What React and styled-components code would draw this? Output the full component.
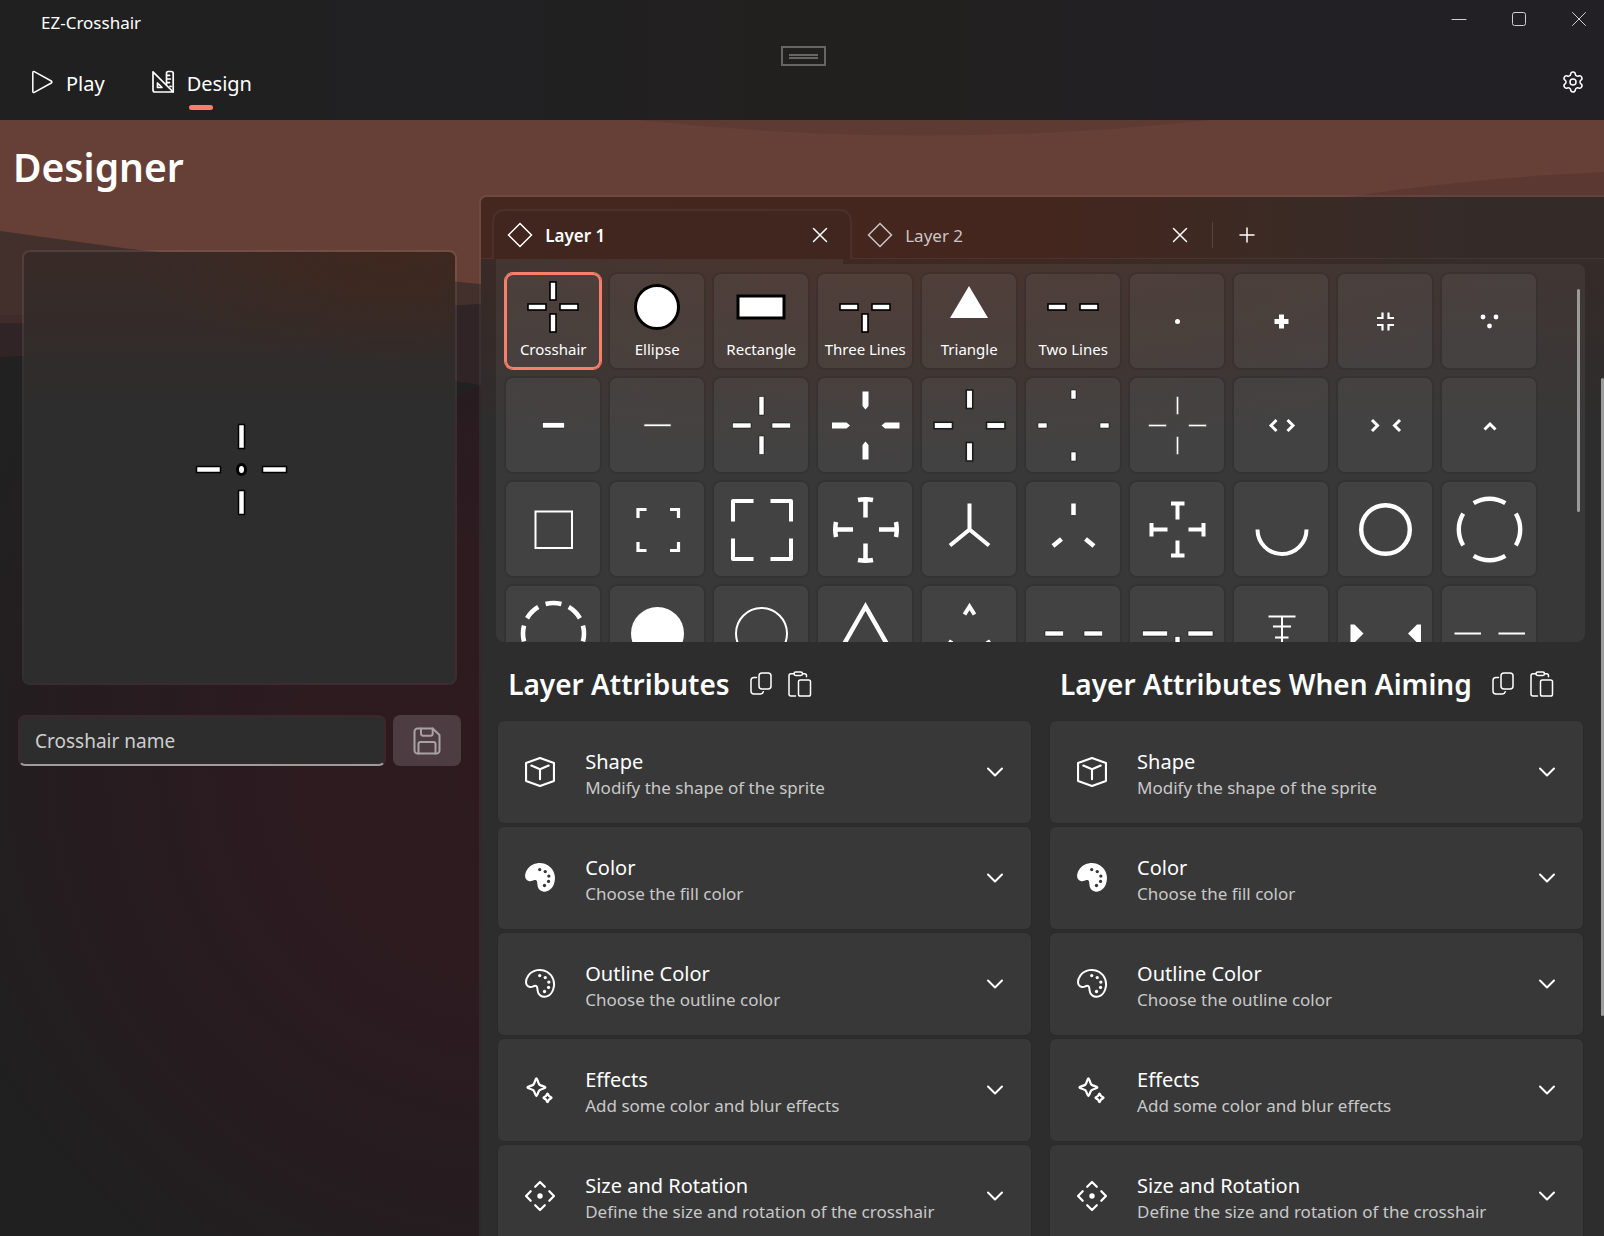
import React, { useState } from "react";
import styled, { createGlobalStyle } from "styled-components";
import { Settings } from "lucide-react";

const GlobalStyle = createGlobalStyle`
  *, *::before, *::after { box-sizing: border-box; }
  body {
    margin: 0;
    background: #202020;
    color: #fff;
    font-family: "Noto Sans", "Open Sans", sans-serif;
  }
  button, input { font: inherit; color: inherit; }
  button { padding: 0; border: 0; background: none; cursor: pointer; }
  svg { display: block; flex: none; }
`;

/* ---------- window chrome ---------- */

const Window = styled.div`
  height: 100vh;
  display: flex;
  flex-direction: column;
  overflow: hidden;
`;

const Header = styled.header`
  position: relative;
  background: linear-gradient(to right, #202020, #212022 30%, #22201e 55%, #222024 75%);
`;

const TitleBar = styled.div`
  display: flex;
  justify-content: space-between;
  align-items: flex-start;
  height: 44px;
  padding-left: 41px;
`;

const AppName = styled.span`
  font-size: 17px;
  line-height: 46px;
`;

const WindowButton = styled.button`
  width: 60px;
  height: 38px;
  margin-right: ${(p) => (p.$last ? "-5px" : "0")};
  display: inline-flex;
  align-items: center;
  justify-content: center;
  color: #d0d0d0;
`;

const WindowButtons = styled.div`
  display: flex;
  overflow: hidden;
`;

const DragHandle = styled.div`
  position: absolute;
  top: 46px;
  left: 50%;
  width: 45px;
  height: 20px;
  margin-left: -21px;
  border: 2px solid #666563;
  display: flex;
  flex-direction: column;
  justify-content: center;
  gap: 1px;
  padding: 0 6px;

  &::before, &::after {
    content: "";
    height: 2px;
    background: #666563;
  }
`;

const Nav = styled.nav`
  display: flex;
  align-items: center;
  gap: 46px;
  height: 76px;
  padding: 0 19px 0 30px;
`;

const NavLink = styled.a`
  display: flex;
  align-items: center;
  gap: 12px;
  color: #fff;
  font-size: 20px;
  line-height: 30px;
  text-decoration: none;
`;

const NavText = styled.span`
  position: relative;
  padding-top: 3px;

  &::after {
    content: "";
    display: ${(p) => (p.$active ? "block" : "none")};
    position: absolute;
    left: 2px;
    bottom: -11px;
    width: 24px;
    height: 5px;
    border-radius: 3px;
    background: #f8806a;
  }
`;

const GearButton = styled.button`
  margin-left: auto;
`;

/* ---------- page ---------- */

const Main = styled.main`
  position: relative;
  flex: 1;
  min-height: 0;
  display: grid;
  grid-template-columns: minmax(0, 3fr) minmax(0, 7fr);
  grid-template-rows: minmax(0, 1fr);
`;

const Backdrop = styled.svg`
  position: absolute;
  inset: 0;
  width: 100%;
  height: 100%;
`;

const Side = styled.section`
  position: relative;
`;

const PageTitle = styled.h1`
  margin: 0;
  padding: 19px 0 55px 13px;
  font-size: 39px;
  line-height: 56px;
  font-weight: 600;
`;

const Preview = styled.div`
  margin: 0 24px 0 22px;
  aspect-ratio: 1;
  display: flex;
  align-items: center;
  justify-content: center;
  border: 2px solid rgba(255, 255, 255, 0.08);
  border-radius: 8px;
  background:
    radial-gradient(ellipse 60% 26% at 85% 0, rgba(70, 36, 20, 0.5), transparent),
    linear-gradient(#382a27, #332b29 18%, #2d2d2d 36%);
  background-clip: padding-box;
`;

const NameForm = styled.form`
  display: flex;
  gap: 7px;
  padding: 30px 20px 0 18px;
`;

const NameInput = styled.input`
  flex: 1;
  min-width: 0;
  height: 51px;
  padding: 0 15px;
  border: 2px solid #3c272e;
  border-bottom-color: #a09a9b;
  border-radius: 7px;
  background: #2d2d2d;
  font-size: 19px;
  outline: none;

  &::placeholder { color: #cdcdcd; opacity: 1; }
`;

const SaveButton = styled.button`
  width: 68px;
  height: 51px;
  display: flex;
  align-items: center;
  justify-content: center;
  border-radius: 7px;
  background: #4d3c42;
  color: #aaa1a4;
`;

/* ---------- layer panel ---------- */

const Panel = styled.section`
  position: relative;
  margin: 75px 0 0 -2px;
  overflow: hidden;
  border: 2px solid rgba(255, 255, 255, 0.05);
  border-width: 2px 0 0 2px;
  border-top-left-radius: 8px;
  background:
    radial-gradient(ellipse 620px 220px at 36% 50px, rgba(90, 34, 14, 0.28), transparent),
    linear-gradient(#3a2d2a, #332b29 100px, #2d2d2d 240px);
  background-clip: padding-box;
`;

const TabStrip = styled.div`
  display: flex;
  align-items: flex-end;
  height: 62px;
  padding-left: 11px;
  background: linear-gradient(to right, #45271f, #44261e 50%, #3c2a24 70%, #342b29 88%);
  box-shadow: inset 0 -1px rgba(255, 255, 255, 0.06);
`;

const Tab = styled.div`
  display: flex;
  align-items: center;
  width: 360px;
  height: 50px;
  padding: 0 22px 0 13px;
  border: 2px solid ${(p) => (p.$active ? "rgba(255, 255, 255, 0.05)" : "transparent")};
  border-bottom: 0;
  border-radius: 12px 12px 0 0;
  background: ${(p) => (p.$active ? "#40261f" : "none")};
  color: ${(p) => (p.$active ? "#fff" : "#cdc5c3")};
  font-size: 17px;
  font-weight: ${(p) => (p.$active ? 600 : 400)};
`;

const TabLabel = styled.button`
  flex: 1;
  display: flex;
  align-items: center;
  gap: 12px;
  text-align: left;
`;

const CloseButton = styled.button`
  color: #fff;
`;

const AddButton = styled.button`
  display: flex;
  align-items: center;
  height: 26px;
  margin-bottom: 11px;
  padding-left: 25px;
  border-left: 1px solid rgba(255, 255, 255, 0.12);
`;

const TabFoot = styled.div`
  width: 347px;
  height: 5px;
  margin-left: 15px;
  background: rgba(255, 255, 255, 0.055);
`;

const Picker = styled.div`
  position: relative;
  height: 378px;
  margin: 0 19px 0 15px;
  padding: 9px;
  overflow: hidden;
  border-radius: 0 8px 8px 8px;
  background: rgba(255, 255, 255, 0.055);
`;

const TileGrid = styled.div`
  display: grid;
  grid-template-columns: repeat(auto-fill, 96px);
  gap: 8px;
`;

const Tile = styled.button`
  position: relative;
  height: 96px;
  border-radius: 8px;
  background: rgba(255, 255, 255, 0.05);
  box-shadow: ${(p) =>
    p.$selected
      ? "inset 0 0 0 2px #f8806a, 0 0 0 1px #f8806a"
      : "inset 0 0 0 1px rgba(0, 0, 0, 0.2), 0 0 0 1px rgba(0, 0, 0, 0.08)"};
`;

const TileName = styled.span`
  position: absolute;
  left: 0;
  right: 0;
  bottom: 9px;
  font-size: 15px;
  line-height: 22px;
  white-space: nowrap;
`;

const ScrollThumb = styled.div`
  position: absolute;
  top: ${(p) => p.$top}px;
  right: ${(p) => p.$right}px;
  width: 3px;
  height: ${(p) => p.$length}px;
  border-radius: 2px;
  background: #9b9b9b;
`;

const Columns = styled.div`
  display: grid;
  grid-template-columns: minmax(0, 1fr) minmax(0, 1fr);
  gap: 17px;
  padding: 18px 20px 0 16px;
`;

const ColumnHead = styled.div`
  display: flex;
  align-items: center;
  height: 48px;
  margin-bottom: 12px;
  padding-left: 11px;
  gap: 14px;
`;

const ColumnTitle = styled.h2`
  margin: 0 5px 0 0;
  font-size: 28px;
  line-height: 48px;
  font-weight: 600;
  white-space: nowrap;
`;

const CardList = styled.div`
  display: grid;
  gap: 2px;
`;

const Card = styled.button`
  display: flex;
  align-items: center;
  gap: 27px;
  height: 104px;
  padding: 0 26px 0 24px;
  border: 1px solid #2a2a2a;
  border-radius: 7px;
  background: #383838;
  text-align: left;
`;

const CardText = styled.span`
  flex: 1;
  display: grid;
  padding-top: 3px;
`;

const CardTitle = styled.span`
  font-size: 20px;
  line-height: 28px;
`;

const CardHint = styled.span`
  font-size: 17px;
  line-height: 24px;
  color: #c8c8c8;
`;

/* ---------- icons ---------- */

const Line = ({ size = 24, width = 1.5, box = 24, children }) => (
  <svg
    width={size}
    height={size}
    viewBox={`0 0 ${box} ${box}`}
    fill="none"
    stroke="currentColor"
    strokeWidth={width}
    strokeLinecap="round"
    strokeLinejoin="round"
    aria-hidden="true"
  >
    {children}
  </svg>
);

const PlayIcon = () => (
  <Line>
    <path d="M2.8 2.4v19.2c0 .8.8 1.2 1.5.8l17-9.4c.8-.5.8-1.5 0-2l-17-9.4c-.7-.4-1.5 0-1.5.8z" />
  </Line>
);

const DesignIcon = () => (
  <Line width={1.7}>
    <path d="M2 1.8 22.2 22H4a2 2 0 0 1-2-2zM6.5 13v4.5H11z" />
    <path d="M15.5 14.5V3.2c0-1 .6-1.7 1.6-1.7h3.4c1 0 1.7.7 1.7 1.7V22M16 5.4h2.5M16 9h3.4M16 12.6h2.5M19 16.4h1" />
  </Line>
);

const CrossIcon = ({ size = 16, width = 1.5 }) => (
  <Line size={size} width={width} box={16}>
    <path d="m1.5 1.5 13 13m0-13-13 13" />
  </Line>
);

const DiamondIcon = () => (
  <Line size={26} box={26}>
    <path d="M13 1.5 24.5 13 13 24.5 1.5 13z" strokeLinejoin="miter" />
  </Line>
);

const SaveIcon = () => (
  <Line size={28} width={2} box={28}>
    <path d="M4.5 1.5h15.2L26.5 8v15.5a3 3 0 0 1-3 3h-19a3 3 0 0 1-3-3v-19a3 3 0 0 1 3-3z" />
    <path d="M8 1.5v5a2.2 2.2 0 0 0 2.2 2.2h7.3a2.2 2.2 0 0 0 2.2-2.2v-5M5.5 26.5V17a2 2 0 0 1 2-2h13a2 2 0 0 1 2 2v9.500" />
  </Line>
);

const CopyIcon = () => (
  <Line>
    <rect x="10" y="1" width="12" height="16" rx="3" />
    <path d="M7.5 5.500H5a3 3 0 0 0-3 3V19a3 3 0 0 0 3 3h6.500a3 3 0 0 0 2.800-2.300" />
  </Line>
);

const PasteIcon = () => (
  <Line size={26} box={26}>
    <rect x="7" y="1" width="8.5" height="3.5" rx="1.7" />
    <path d="M7 2.800H4a2 2 0 0 0-2 2V23a2 2 0 0 0 2 2h4.500M15.500 2.800h2a2 2 0 0 1 2 2v1" />
    <rect x="11.5" y="9" width="12" height="16" rx="1.8" />
  </Line>
);

const ChevronIcon = () => (
  <Line size={20} width={2} box={20}>
    <path d="m3 6.500 7 7 7-7" />
  </Line>
);

const CubeIcon = () => (
  <Line size={36} width={1.4}>
    <path d="M12 2.600 21.300 6v12L12 21.400 2.700 18V6zM6.200 7.700 12 10.200l5.800-2.500M12 10.200v6.600" />
  </Line>
);

const PALETTE =
  "M3.839 5.858c2.94-3.916 9.03-5.055 13.364-2.36 4.28 2.66 5.854 7.777 4.1 12.577-1.655 4.533-6.016 6.328-9.159 4.048-1.177-.854-1.634-1.925-1.854-3.664l-.106-.987-.045-.398c-.123-.934-.311-1.352-.705-1.572-.535-.298-.892-.305-1.595-.033l-.351.146-.179.078c-1.014.44-1.688.595-2.541.416l-.2-.047-.164-.047c-2.789-.864-3.202-4.647-.565-8.157z";

const DOTS = [[11.8, 6.4], [15.5, 7.7], [17.9, 10.7], [17.7, 14.3], [15, 17]];

const PaletteIcon = ({ filled }) => (
  <Line size={36} width={filled ? 0 : 1.4}>
    <path
      d={PALETTE}
      fill={filled ? "currentColor" : "none"}
      transform={filled ? undefined : "translate(.7 .7) scale(.94)"}
    />
    {DOTS.map(([x, y]) => (
      <circle key={y} cx={x} cy={y} r={1.1} stroke="none" fill={filled ? "#383838" : "currentColor"} />
    ))}
  </Line>
);

const EffectsIcon = () => (
  <Line size={36} width={1.5}>
    <path d="M9.600 4.200c.7 0 1 3.200 2 4.200s4 1.200 4 1.900-3 .9-4 1.900-1.300 3.800-2 3.800-1-2.800-2-3.800-4-1.200-4-1.900 3-.9 4-1.900 1.300-4.200 2-4.200z" />
    <path d="M17 14.400c.5 0 .6 1.300 1.100 1.700s1.600.6 1.600 1.100-1.100.7-1.600 1.100-.6 1.700-1.100 1.700-.6-1.300-1.100-1.700-1.600-.6-1.600-1.100 1.100-.7 1.600-1.100.6-1.700 1.100-1.700z" />
  </Line>
);

const MoveIcon = () => (
  <Line size={36}>
    <path d="M8.800 5.800 12 2.700l3.200 3.100M8.800 18.200l3.200 3.100 3.200-3.100M5.800 8.800 2.700 12l3.100 3.200M18.200 8.800l3.100 3.200-3.100 3.200" />
    <circle cx="12" cy="12" r="1.8" fill="currentColor" stroke="none" />
  </Line>
);

/* ---------- crosshair sprites, drawn on a 96 x 96 tile ---------- */

const bars = (list, outline = 0.5, edge = "#000") =>
  list.map(([x, y, w, h]) => (
    <rect key={`${x}-${y}`} x={x} y={y} width={w} height={h} fill="#fff" stroke={edge} strokeWidth={outline} />
  ));

const Stroke = ({ d, w = 3, join = "miter", cap = "butt" }) => (
  <path d={d} fill="none" stroke="#fff" strokeWidth={w} strokeLinejoin={join} strokeLinecap={cap} />
);

const arcs = (r, count, spread) =>
  Array.from({ length: count }, (_, i) => {
    const mid = (i * 2 * Math.PI) / count - Math.PI / 2;
    const half = (spread * Math.PI) / 180;
    const at = (a) => `${48 + r * Math.cos(a)} ${48 + r * Math.sin(a)}`;
    return `M${at(mid - half)}A${r} ${r} 0 0 1 ${at(mid + half)}`;
  }).join("");

const cross = (near, far, t) => [
  [48 - t / 2, 48 - far, t, far - near],
  [48 - t / 2, 48 + near, t, far - near],
  [48 - far, 48 - t / 2, far - near, t],
  [48 + near, 48 - t / 2, far - near, t],
];

const SPRITES = [
  { name: "Crosshair", art: bars([[45, 9, 6, 18], [45, 41, 6, 18], [23, 31, 18, 6], [55, 31, 18, 6]], 1.6) },
  { name: "Ellipse", art: <circle cx="48" cy="34" r="21.5" fill="#fff" stroke="#000" strokeWidth="3" /> },
  { name: "Rectangle", art: bars([[25, 23, 46, 22]], 3) },
  { name: "Three Lines", art: bars([[23, 31, 18, 6], [55, 31, 18, 6], [45, 41, 6, 18]], 1.6) },
  { name: "Triangle", art: <path d="M48 13 67 45H29z" fill="#fff" /> },
  { name: "Two Lines", art: bars([[23, 31, 18, 6], [55, 31, 18, 6]], 1.6) },
  { art: <circle cx="48" cy="48" r="2.5" fill="#fff" /> },
  { art: <Stroke d="M48 41v14M41 48h14" w={5} /> },
  { art: <Stroke d="M39.500 44.500h5.500v-5.500M56.500 44.500H51v-5.500M39.500 51.500h5.500V57M56.500 51.500H51V57" w={2.2} /> },
  {
    art: [[41.5, 43.5], [54.5, 43.5], [48, 52.5]].map(([x, y]) => (
      <circle key={x} cx={x} cy={y} r="2.4" fill="#fff" />
    )),
  },
  { art: bars([[37, 45, 22, 5.5]]) },
  { art: bars([[34.5, 46.5, 27, 2.5]], 0.8, "#555") },
  { art: bars(cross(10.5, 29, 5)) },
  {
    art: (
      <path
        fill="#fff"
        d="M45 14h6v14.500L48 32l-3-3.500zM45 82h6V67.500L48 64l-3 3.500zM14.500 45v6H29l3.500-3L29 45zM82 45v6H67.500L64 48l3.500-3z"
      />
    ),
  },
  { art: bars(cross(17, 35.5, 6.5), 1.6, "#1c1c1c") },
  { art: bars(cross(26.5, 35.5, 5)) },
  { art: bars(cross(11, 29, 2.5), 0.8, "#555") },
  { art: <Stroke d="m43 42.500-5.500 5.500 5.500 5.500M54 42.500l5.500 5.500-5.500 5.500" /> },
  { art: <Stroke d="m34.500 42.500 5.500 5.500-5.500 5.500M62.500 42.500 57 48l5.500 5.500" /> },
  { art: <Stroke d="m43 52 5.500-5.500L54 52" /> },
  { art: <Stroke d="M30 30h36.500v36.500H30z" w={2} /> },
  { art: <Stroke d="M37 28h-8.500v8.500M60.500 28H69v8.500M37 69h-8.500v-8.500M60.500 69H69v-8.500" w={3.2} /> },
  {
    art: (
      <Stroke
        d="M40 19.500H19.500V40M57 19.500h20.500V40M40 77.500H19.500V57M57 77.500h20.500V57"
        w={4}
        join="round"
      />
    ),
  },
  {
    art: (
      <Stroke
        d="M40.500 18.500q7.500-1.500 15 0M48 18v18M40.500 78.500q7.500 1.500 15 0M48 79V62M18.500 40.500q-1.500 7.500 0 15M18 48h17.500M78.500 40.500q1.500 7.500 0 15M79 48H61.500"
        w={4.5}
      />
    ),
  },
  { art: <Stroke d="M48 22v26L28.500 64M48 48l19.500 16" w={4} /> },
  { art: <Stroke d="M48 22v11.500M36 57.500 27.500 64.500M60 57.500l8.500 7" w={4.5} /> },
  {
    art: (
      <Stroke
        d="M41.500 22h13.500M48 22v16M41.500 74h13.500M48 74V59M22 41.500v13.500M22 48h16M74 41.500v13.500M74 48H59"
        w={4}
      />
    ),
  },
  { art: <Stroke d="M24 48a24.500 24.500 0 0 0 49 0" w={4} /> },
  { art: <circle cx="48" cy="48" r="24.3" fill="none" stroke="#fff" strokeWidth="4.4" /> },
  { art: <Stroke d={arcs(30.7, 4, 31)} w={4.4} /> },
  { art: <Stroke d={arcs(30.5, 8, 15)} w={4.6} /> },
  { art: <circle cx="48" cy="48" r="26.5" fill="#fff" /> },
  { art: <circle cx="48" cy="48" r="25.5" fill="none" stroke="#fff" strokeWidth="2" /> },
  { art: <Stroke d="M48 21 20 70h56z" w={4.5} /> },
  { art: <Stroke d="m43 29 5-8 5 8M30 55l-7 11h9M66 55l7 11h-9" w={4} /> },
  { art: bars([[19.5, 45.5, 18.5, 5], [58.5, 45.5, 18.5, 5]]) },
  { art: bars([[13, 45.5, 25, 5], [58.5, 45.5, 25, 5], [45.5, 51, 5, 25]]) },
  { art: <Stroke d="M35 31h27M39.500 41h18M41.500 52h13.500M48.500 31v43" w={2} /> },
  { art: <path fill="#fff" d="M13 39h4l9 9-9 9h-4zM83.500 39h-4l-9 9 9 9h4z" /> },
  { art: <Stroke d="M13 48h26.500M57 48h26.500" w={2} /> },
];

/* ---------- parts ---------- */

const ATTRIBUTES = [
  { title: "Shape", hint: "Modify the shape of the sprite", icon: <CubeIcon /> },
  { title: "Color", hint: "Choose the fill color", icon: <PaletteIcon filled /> },
  { title: "Outline Color", hint: "Choose the outline color", icon: <PaletteIcon /> },
  { title: "Effects", hint: "Add some color and blur effects", icon: <EffectsIcon /> },
  { title: "Size and Rotation", hint: "Define the size and rotation of the crosshair", icon: <MoveIcon /> },
];

const Landscape = () => (
  <Backdrop viewBox="0 0 1604 1116" preserveAspectRatio="none" aria-hidden="true">
    <defs>
      <radialGradient id="ground" gradientUnits="userSpaceOnUse" cx="520" cy="640" r="620">
        <stop offset="0" stopColor="#2e1a1e" />
        <stop offset="0.35" stopColor="#2d1b20" />
        <stop offset="0.7" stopColor="#261c20" />
        <stop offset="1" stopColor="#202020" />
      </radialGradient>
      <linearGradient id="dusk" x1="0" x2="0" y1="0" y2="1">
        <stop offset="0" stopColor="#212121" />
        <stop offset="1" stopColor="#212121" stopOpacity="0" />
      </linearGradient>
    </defs>
    <rect width="1604" height="1116" fill="#664036" />
    <path d="M640 0Q925 31 1210 0z" fill="#5d3a32" />
    <path d="M1340 78Q1470 58 1604 52v120H1340z" fill="#5c3833" />
    <path d="M0 111 130 129 480 164h60V300H0z" fill="#432f2c" />
    <path d="M0 195h220l260-11h60v120H0z" fill="#402b2b" />
    <path d="M0 203h200l280-19h60v200H0z" fill="#302427" />
    <path d="M0 237q240-12 480 28h1124v851H0z" fill="url(#ground)" />
    <path d="M0 237q240-12 480 28L0 520z" fill="url(#dusk)" />
  </Backdrop>
);

const LayerTab = ({ name, active, onSelect }) => (
  <Tab $active={active}>
    <TabLabel onClick={onSelect}>
      <DiamondIcon />
      {name}
    </TabLabel>
    <CloseButton aria-label={`Close ${name}`}>
      <CrossIcon />
    </CloseButton>
  </Tab>
);

const AttributeColumn = ({ title }) => (
  <section>
    <ColumnHead>
      <ColumnTitle>{title}</ColumnTitle>
      <button aria-label="Copy">
        <CopyIcon />
      </button>
      <button aria-label="Paste">
        <PasteIcon />
      </button>
    </ColumnHead>
    <CardList>
      {ATTRIBUTES.map((item) => (
        <Card key={item.title}>
          {item.icon}
          <CardText>
            <CardTitle>{item.title}</CardTitle>
            <CardHint>{item.hint}</CardHint>
          </CardText>
          <ChevronIcon />
        </Card>
      ))}
    </CardList>
  </section>
);

export default function App() {
  const [layer, setLayer] = useState("Layer 1");
  const [sprite, setSprite] = useState(0);

  return (
    <Window>
      <GlobalStyle />
      <Header>
        <TitleBar>
          <AppName>EZ-Crosshair</AppName>
          <WindowButtons>
            <WindowButton aria-label="Minimize">
              <Line size={16} width={1} box={16}>
                <path d="M1 8.500h14" />
              </Line>
            </WindowButton>
            <WindowButton aria-label="Maximize">
              <Line size={16} width={1} box={16}>
                <rect x="1.5" y="1.5" width="13" height="13" rx="2" />
              </Line>
            </WindowButton>
            <WindowButton aria-label="Close" $last>
              <CrossIcon width={1} />
            </WindowButton>
          </WindowButtons>
        </TitleBar>
        <Nav>
          <NavLink href="#play">
            <PlayIcon />
            <NavText>Play</NavText>
          </NavLink>
          <NavLink href="#design">
            <DesignIcon />
            <NavText $active>Design</NavText>
          </NavLink>
          <GearButton aria-label="Settings">
            <Settings size={24} strokeWidth={1.5} />
          </GearButton>
        </Nav>
        <DragHandle />
      </Header>
      <Main>
        <Landscape />
        <Side>
          <PageTitle>Designer</PageTitle>
          <Preview>
            <svg width="96" height="96" viewBox="-1.5 -2 96 96" role="img" aria-label="Crosshair preview">
              {bars(
                [[45, 2.5, 6, 24], [45, 68.5, 6, 24], [3, 44.5, 24, 6], [69, 44.5, 24, 6]],
                1.5
              )}
              <ellipse cx="48" cy="47.5" rx="4" ry="5" fill="#fff" stroke="#000" strokeWidth="3" />
            </svg>
          </Preview>
          <NameForm onSubmit={(e) => e.preventDefault()}>
            <NameInput aria-label="Crosshair name" placeholder="Crosshair name" />
            <SaveButton aria-label="Save">
              <SaveIcon />
            </SaveButton>
          </NameForm>
        </Side>
        <Panel>
          <TabStrip>
            {["Layer 1", "Layer 2"].map((name) => (
              <LayerTab key={name} name={name} active={name === layer} onSelect={() => setLayer(name)} />
            ))}
            <AddButton aria-label="Add layer">
              <Line size={18} box={18}>
                <path d="M9 2v14M2 9h14" />
              </Line>
            </AddButton>
          </TabStrip>
          <TabFoot />
          <Picker>
            <TileGrid>
              {SPRITES.map((item, i) => (
                <Tile
                  key={i}
                  $selected={i === sprite}
                  aria-label={item.name || `Sprite ${i + 1}`}
                  onClick={() => setSprite(i)}
                >
                  <svg
                    width="96"
                    height="96"
                    viewBox={item.name ? "0 0 96 96" : "-0.5 -0.5 96 96"}
                    aria-hidden="true"
                  >
                    {item.art}
                  </svg>
                  {item.name && <TileName>{item.name}</TileName>}
                </Tile>
              ))}
            </TileGrid>
            <ScrollThumb $top={25} $right={5} $length={223} />
          </Picker>
          <Columns>
            <AttributeColumn title="Layer Attributes" />
            <AttributeColumn title="Layer Attributes When Aiming" />
          </Columns>
          <ScrollThumb $top={181} $right={0} $length={638} />
        </Panel>
      </Main>
    </Window>
  );
}
